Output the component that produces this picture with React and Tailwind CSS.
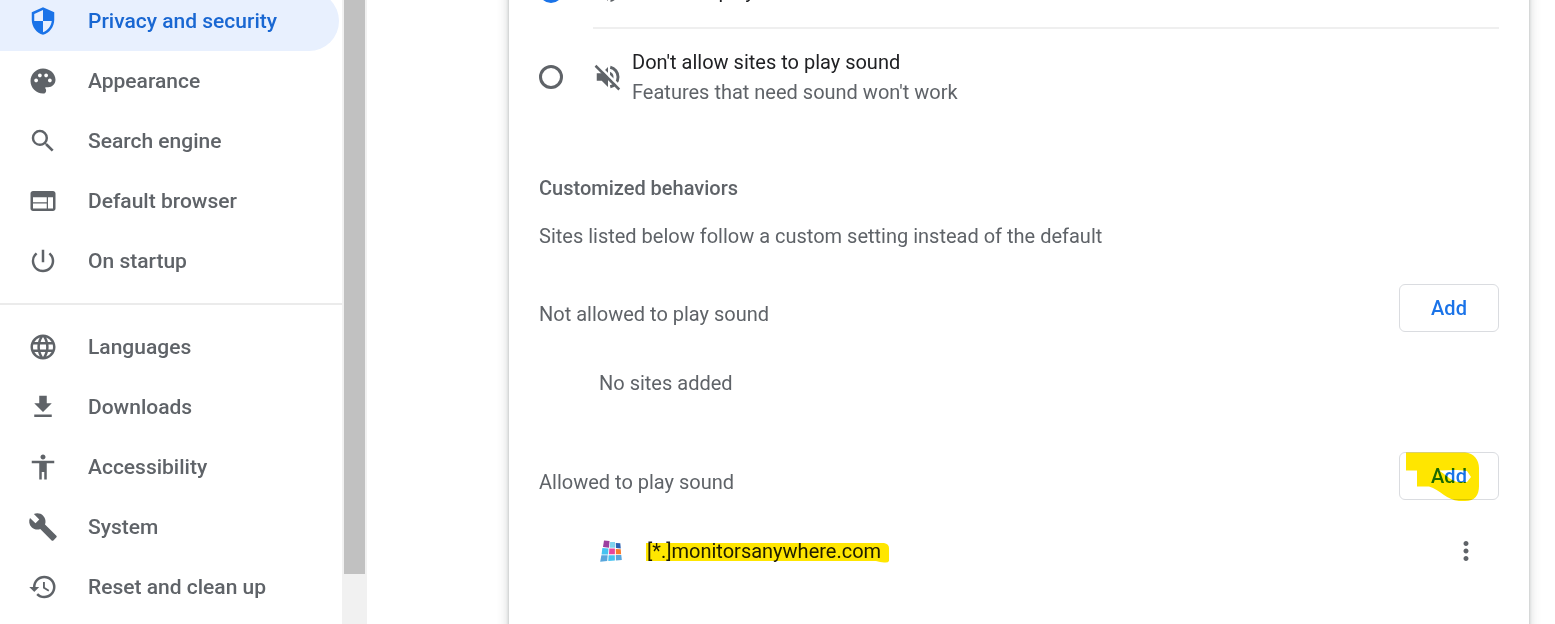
import {
  MdAccessibility,
  MdBuild,
  MdFileDownload,
  MdLanguage,
  MdMoreVert,
  MdPalette,
  MdPowerSettingsNew,
  MdRestore,
  MdSearch,
  MdVolumeUp,
  MdWeb,
} from "react-icons/md"

function ShieldIcon({ className }) {
  return (
    <svg viewBox="0 0 24 24" fill="currentColor" className={className} aria-hidden="true">
      <path d="M12 1L3 5v6c0 5.55 3.84 10.74 9 12 5.16-1.26 9-6.45 9-12V5l-9-4zm0 10.99h7c-.53 4.12-3.28 7.79-7 8.94V12H5V6.300l7-3.110v8.800z" />
    </svg>
  )
}

function SoundOffIcon({ className }) {
  return (
    <svg viewBox="0 0 24 24" fill="none" className={className} aria-hidden="true">
      <path fill="currentColor" d="M3 9v6h4l5 5V4L7 9H3z" />
      <path fill="currentColor" d="M13.600 7.700v8.600a4.700 4.700 0 0 0 0-8.600z" />
      <path stroke="currentColor" strokeWidth="2.300" d="M13.800 4.200a8 8 0 0 1 0 15.600" />
      <path stroke="#fff" strokeWidth="2" d="M3.600 1.800l19 19" />
      <path stroke="currentColor" strokeWidth="2" d="M2 3l19 19" />
    </svg>
  )
}

function SiteIcon() {
  return (
    <svg viewBox="0 0 24 24" className="size-6" aria-hidden="true">
      <path fill="#9b3fa0" d="M5 1.500l5.500.6-.5 6.600-6-.6z" />
      <path fill="#7fd3ee" d="M11.100 2.900h4.900l.2 5.800h-5.400z" />
      <path fill="#2a62b4" d="M16.800 3.900l4.500.4.500 5.200-4.800-.5z" />
      <path fill="#45c2f0" d="M3.400 9.100l6.100.4-.4 6H2.600z" />
      <path fill="#e8459c" d="M10.300 9.600h5.600v5.600H10z" />
      <path fill="#f97b2c" d="M16.800 10l5 .3.300 4.900h-5.200z" />
      <path fill="#58a6dc" d="M2.400 16.200h6.300l-.5 5.700-7 .8z" />
      <path fill="#45c2f0" d="M9.600 16.200h6.200l.1 5.400-6.600.5z" />
      <path fill="#58a6dc" d="M16.800 16.100h5.500l.5 4.900-5.900.5z" />
    </svg>
  )
}

const primaryItems = [
  { label: "Privacy and security", icon: ShieldIcon, active: true },
  { label: "Appearance", icon: MdPalette },
  { label: "Search engine", icon: MdSearch },
  { label: "Default browser", icon: MdWeb },
  { label: "On startup", icon: MdPowerSettingsNew },
]

const advancedItems = [
  { label: "Languages", icon: MdLanguage },
  { label: "Downloads", icon: MdFileDownload },
  { label: "Accessibility", icon: MdAccessibility },
  { label: "System", icon: MdBuild },
  { label: "Reset and clean up", icon: MdRestore },
]

function NavItem({ label, icon: Icon, active }) {
  return (
    <li>
      <a
        href="#"
        aria-current={active ? "page" : undefined}
        className={
          active
            ? "mr-[3px] flex h-[60px] items-center gap-[30px] rounded-r-full bg-[#e8f0fe] pl-7 text-[#1967d2]"
            : "mr-[3px] flex h-[60px] items-center gap-[30px] rounded-r-full pl-7 text-[#5f6368]"
        }
      >
        <Icon className={active ? "size-[30px] text-[#1a73e8]" : "size-[30px]"} />
        {label}
      </a>
    </li>
  )
}

function Sidebar() {
  return (
    <div className="flex w-[367px] shrink-0">
      <nav className="-mt-[9px] min-w-0 flex-1 text-[21px] font-medium">
        <ul>
          {primaryItems.map((item) => (
            <NavItem key={item.label} {...item} />
          ))}
        </ul>
        <hr className="my-3 border-t-2 border-[#ebebeb]" />
        <ul>
          {advancedItems.map((item) => (
            <NavItem key={item.label} {...item} />
          ))}
        </ul>
      </nav>
      <div className="w-[25px] bg-[#f1f1f1] px-0.5">
        <div className="h-[92%] bg-[#c1c1c1]" />
      </div>
    </div>
  )
}

const radioClass =
  "size-6 shrink-0 appearance-none rounded-full border-3 border-[#5f6368] checked:border-[#1a73e8] checked:bg-[#1a73e8] checked:shadow-[inset_0_0_0_3px_white]"

function SoundOptions() {
  return (
    <div>
      <label className="flex h-[72px] items-center">
        <input type="radio" name="sound" defaultChecked className={radioClass} />
        <MdVolumeUp className="ml-[30px] size-[30px] text-[#5f6368]" />
        <span className="ml-[9px]">Sites can play sound</span>
      </label>
      <hr className="ml-[54px] border-t-2 border-[#efefef]" />
      <label className="flex h-24 items-center">
        <input type="radio" name="sound" className={radioClass} />
        <SoundOffIcon className="ml-[30px] size-[30px] text-[#5f6368]" />
        <span className="ml-[9px]">
          Don't allow sites to play sound
          <span className="block text-[#5f6368]">Features that need sound won't work</span>
        </span>
      </label>
    </div>
  )
}

function AddButton({ highlighted }) {
  return (
    <button
      type="button"
      className="relative h-12 w-[100px] rounded-md border border-[#dadce0] font-medium text-[#1a73e8]"
    >
      Add
      {highlighted && (
        <svg
          viewBox="0 0 100 50"
          className="absolute -top-px -left-px h-[50px] w-[100px] max-w-none mix-blend-multiply"
          aria-hidden="true"
        >
          <path
            fill="#ffe600"
            fillRule="evenodd"
            d="M7 0.500H66C75 1 80 8 80 16V34C80 43 76 49 66 49H60C48 48 41 38 30 34.500H18V18.500H7zM40 18.500C46 22 51 28 58 30H68L72 25L68 19C60 17.500 50 18 40 18.500z"
          />
        </svg>
      )}
    </button>
  )
}

function SiteListHeader({ title, highlighted }) {
  return (
    <div className="flex h-[60px] items-center justify-between">
      <h3 className="text-[#5f6368]">{title}</h3>
      <div className="-mt-3">
        <AddButton highlighted={highlighted} />
      </div>
    </div>
  )
}

export default function App() {
  return (
    <div className="flex h-screen overflow-hidden bg-white font-[Roboto,sans-serif] text-xl leading-[31px] text-[#202124]">
      <Sidebar />
      <main className="-mt-[45px] mr-[26px] -mb-6 ml-[142px] min-w-0 flex-1 px-[30px] leading-[30px] shadow-[0_1px_3px_rgba(60,64,67,0.3),0_3px_9px_3px_rgba(60,64,67,0.15)]">
        <SoundOptions />
        <h2 className="mt-12 font-medium text-[#5f6368]">Customized behaviors</h2>
        <p className="mt-[18px] text-[#5f6368]">Sites listed below follow a custom setting instead of the default</p>

        <section className="mt-[33px]">
          <SiteListHeader title="Not allowed to play sound" />
          <p className="flex h-[78px] items-center pl-[60px] text-[#5f6368]">No sites added</p>
        </section>

        <section className="mt-[30px]">
          <SiteListHeader title="Allowed to play sound" highlighted />
          <div className="flex h-[78px] items-center pl-[60px]">
            <SiteIcon />
            <span className="relative ml-6">
              [*.]monitorsanywhere.com
              <svg
                viewBox="0 0 243 22"
                className="absolute top-1.5 -left-px h-[22px] w-[243px] max-w-none mix-blend-multiply"
                aria-hidden="true"
              >
                <path fill="#ffe600" d="M0 1H238Q243 2 243 6V19Q242 21 238 20.500Q234 20 230 19H0z" />
              </svg>
            </span>
            <button type="button" aria-label="More actions" className="mr-[18px] ml-auto text-[#5f6368]">
              <MdMoreVert className="size-[30px]" />
            </button>
          </div>
        </section>
      </main>
    </div>
  )
}
